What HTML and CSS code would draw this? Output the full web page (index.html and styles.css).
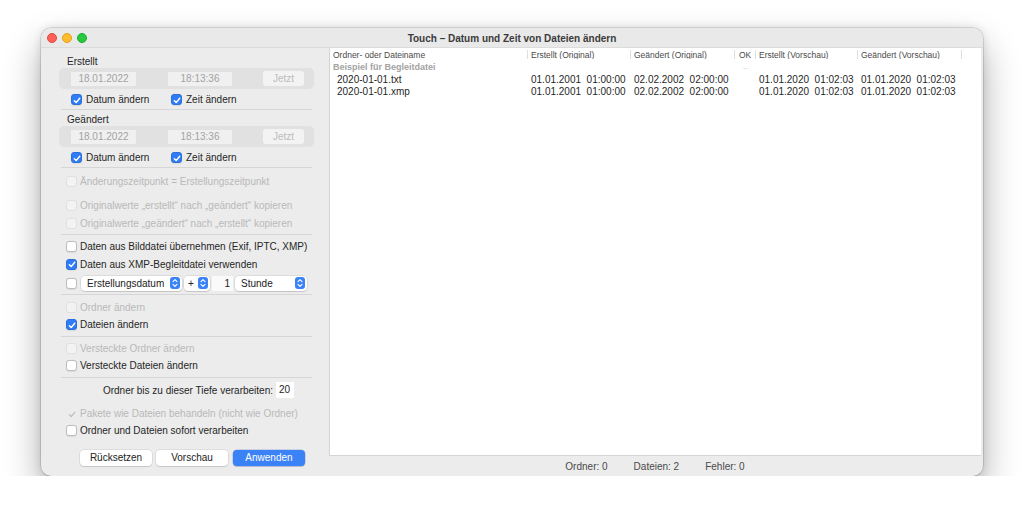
FILE: index.html
```html
<!DOCTYPE html>
<html>
<head>
<meta charset="utf-8">
<link rel="stylesheet" href="styles.css">
</head>
<body>
<div class="window">
  <div class="titlebar">
    <div class="lights"><span class="light red"></span><span class="light yellow"></span><span class="light green"></span></div>
    <div class="title">Touch – Datum und Zeit von Dateien ändern</div>
    <div></div>
  </div>
  <div class="content">
    <div class="sidebar">
      <div class="group-label">Erstellt</div>
      <div class="datebox">
        <div class="field date">18.01.2022</div>
        <div class="field time">18:13:36</div>
        <div class="nowbtn">Jetzt</div>
      </div>
      <div class="checkrow">
        <div class="check wide"><span class="cb on"><svg viewBox="0 0 11 11"><path d="M2.6 5.7 L4.6 7.8 L8.5 3.1"/></svg></span>Datum ändern</div>
        <div class="check"><span class="cb on"><svg viewBox="0 0 11 11"><path d="M2.6 5.7 L4.6 7.8 L8.5 3.1"/></svg></span>Zeit ändern</div>
      </div>
      <div class="sep"></div>
      <div class="group-label second">Geändert</div>
      <div class="datebox">
        <div class="field date">18.01.2022</div>
        <div class="field time">18:13:36</div>
        <div class="nowbtn">Jetzt</div>
      </div>
      <div class="checkrow">
        <div class="check wide"><span class="cb on"><svg viewBox="0 0 11 11"><path d="M2.6 5.7 L4.6 7.8 L8.5 3.1"/></svg></span>Datum ändern</div>
        <div class="check"><span class="cb on"><svg viewBox="0 0 11 11"><path d="M2.6 5.7 L4.6 7.8 L8.5 3.1"/></svg></span>Zeit ändern</div>
      </div>
      <div class="sep"></div>

      <div class="opt disabled mt4"><span class="cb"></span>Änderungszeitpunkt = Erstellungszeitpunkt</div>
      <div class="opt disabled mt6"><span class="cb"></span>Originalwerte „erstellt“ nach „geändert“ kopieren</div>
      <div class="opt disabled"><span class="cb"></span>Originalwerte „geändert“ nach „erstellt“ kopieren</div>
      <div class="sep mt2"></div>

      <div class="opt mt2"><span class="cb"></span>Daten aus Bilddatei übernehmen (Exif, IPTC, XMP)</div>
      <div class="opt"><span class="cb on"><svg viewBox="0 0 11 11"><path d="M2.6 5.7 L4.6 7.8 L8.5 3.1"/></svg></span>Daten aus XMP-Begleitdatei verwenden</div>
      <div class="opt poprow"><span class="cb"></span>
        <div class="popup p-field">Erstellungsdatum<span class="stepper"><svg viewBox="0 0 10 12"><path d="M3 4.6 L5 2.6 L7 4.6 M3 7.4 L5 9.4 L7 7.4"/></svg></span></div>
        <div class="popup p-sign">+<span class="stepper"><svg viewBox="0 0 10 12"><path d="M3 4.6 L5 2.6 L7 4.6 M3 7.4 L5 9.4 L7 7.4"/></svg></span></div>
        <div class="numfield">1</div>
        <div class="popup p-unit">Stunde<span class="stepper"><svg viewBox="0 0 10 12"><path d="M3 4.6 L5 2.6 L7 4.6 M3 7.4 L5 9.4 L7 7.4"/></svg></span></div>
      </div>
      <div class="sep mt2"></div>

      <div class="opt short disabled mt4"><span class="cb"></span>Ordner ändern</div>
      <div class="opt short"><span class="cb on"><svg viewBox="0 0 11 11"><path d="M2.6 5.7 L4.6 7.8 L8.5 3.1"/></svg></span>Dateien ändern</div>
      <div class="sep mt3"></div>

      <div class="opt short disabled mt3"><span class="cb"></span>Versteckte Ordner ändern</div>
      <div class="opt short"><span class="cb"></span>Versteckte Dateien ändern</div>
      <div class="sep mt3"></div>

      <div class="depthrow">Ordner bis zu dieser Tiefe verarbeiten:<div class="depthfield">20</div></div>

      <div class="opt short disabled mt7"><span class="cb ghost"><svg viewBox="0 0 11 11"><path d="M2.6 5.7 L4.6 7.8 L8.5 3.1"/></svg></span>Pakete wie Dateien behandeln (nicht wie Ordner)</div>
      <div class="opt short"><span class="cb"></span>Ordner und Dateien sofort verarbeiten</div>

      <div class="buttons">
        <div class="btn">Rücksetzen</div>
        <div class="btn">Vorschau</div>
        <div class="btn primary">Anwenden</div>
      </div>
    </div>

    <div class="main">
      <div class="table">
        <div class="thead">
          <div class="th">Ordner- oder Dateiname</div>
          <div class="th">Erstellt (Original)</div>
          <div class="th">Geändert (Original)</div>
          <div class="th ok">OK</div>
          <div class="th">Erstellt (Vorschau)</div>
          <div class="th">Geändert (Vorschau)</div>
          <div class="th last"></div>
        </div>
        <div class="tr grouprow">
          <div class="td groupname">Beispiel für Begleitdatei</div>
          <div class="td"></div>
          <div class="td"></div>
          <div class="td dash">–</div>
          <div class="td"></div>
          <div class="td"></div>
          <div class="td"></div>
        </div>
        <div class="tr">
          <div class="td name">2020-01-01.txt</div>
          <div class="td">01.01.2001  01:00:00</div>
          <div class="td">02.02.2002  02:00:00</div>
          <div class="td"></div>
          <div class="td">01.01.2020  01:02:03</div>
          <div class="td">01.01.2020  01:02:03</div>
          <div class="td"></div>
        </div>
        <div class="tr">
          <div class="td name">2020-01-01.xmp</div>
          <div class="td">01.01.2001  01:00:00</div>
          <div class="td">02.02.2002  02:00:00</div>
          <div class="td"></div>
          <div class="td">01.01.2020  01:02:03</div>
          <div class="td">01.01.2020  01:02:03</div>
          <div class="td"></div>
        </div>
      </div>
      <div class="status">
        <span>Ordner: 0</span>
        <span>Dateien: 2</span>
        <span>Fehler: 0</span>
      </div>
    </div>
  </div>
</div>
</body>
</html>
```
FILE: styles.css
```css
html, body {
  margin: 0;
  padding: 0;
  background: #ffffff;
}
body {
  font-family: "Liberation Sans", Arial, sans-serif;
  color: #262626;
  padding-top: 28px;
  padding-left: 41px;
}
.window {
  width: 942px;
  height: 448px;
  border-radius: 10px;
  background: #ececec;
  box-shadow: 0 18px 36px rgba(0, 0, 0, 0.32), 0 0 10px rgba(0, 0, 0, 0.12), 0 0 0 0.5px rgba(0, 0, 0, 0.22);
  overflow: hidden;
  display: flex;
  flex-direction: column;
}
.titlebar {
  height: 20px;
  box-sizing: border-box;
  flex: none;
  display: grid;
  grid-template-columns: 1fr auto 1fr;
  align-items: center;
  background: #e9e9e9;
  border-bottom: 1px solid #dcdcdc;
}
.lights {
  display: flex;
  gap: 5px;
  padding-left: 6px;
  padding-top: 1px;
}
.light {
  width: 10px;
  height: 10px;
  border-radius: 50%;
  box-sizing: border-box;
}
.red { background: #fe5f57; border: 0.5px solid #e2463f; }
.yellow { background: #febc2e; border: 0.5px solid #e1a116; }
.green { background: #28c840; border: 0.5px solid #14ae2a; }
.title {
  font-weight: bold;
  font-size: 10px;
  color: #3b3b3b;
  padding-top: 1px;
}
.content {
  flex: 1;
  display: flex;
  min-height: 0;
}

/* Sidebar */
.sidebar {
  width: 288px;
  flex: none;
  box-sizing: border-box;
  padding: 7px 15px 0 18px;
  font-size: 10px;
  color: #262626;
}
.group-label {
  height: 13px;
  line-height: 14px;
  padding-left: 8px;
}
.group-label.second { margin-top: 3px; }
.datebox {
  height: 21px;
  background: #e1e1e1;
  border-radius: 5px;
  display: flex;
  align-items: center;
  padding-left: 12px;
}
.field {
  height: 14px;
  line-height: 14px;
  background: #f0f0f0;
  color: #a2a2a2;
  text-align: center;
}
.field.date { width: 65px; }
.field.time { width: 64px; margin-left: 32px; }
.nowbtn {
  width: 41px;
  height: 15px;
  line-height: 15px;
  margin-left: 31px;
  text-align: center;
  background: #f3f3f3;
  border-radius: 3px;
  color: #bcbcbc;
}
.checkrow {
  height: 20px;
  box-sizing: border-box;
  padding-top: 1px;
  padding-left: 12px;
  display: flex;
  align-items: center;
}
.check {
  display: flex;
  align-items: center;
  gap: 4px;
}
.check.wide { width: 100px; }
.cb {
  width: 11px;
  height: 11px;
  flex: none;
  box-sizing: border-box;
  border-radius: 3px;
  background: #ffffff;
  border: 0.5px solid #bdbdbd;
  box-shadow: 0 0.5px 1px rgba(0, 0, 0, 0.08);
  display: flex;
}
.cb svg { width: 11px; height: 11px; margin: -0.5px; }
.cb path {
  fill: none;
  stroke: #ffffff;
  stroke-width: 1.6;
  stroke-linecap: round;
  stroke-linejoin: round;
}
.cb.on {
  background: #2f7cf6;
  border-color: #2a6fdc;
}
.sep {
  height: 1px;
  background: #d6d6d6;
  margin: 0 2px;
}
.mt2 { margin-top: 2px; }
.mt3 { margin-top: 3px; }
.mt4 { margin-top: 4px; }
.mt6 { margin-top: 6px; }
.mt7 { margin-top: 7px; }
.opt {
  height: 18px;
  display: flex;
  align-items: center;
  gap: 3px;
  padding-left: 7px;
  white-space: nowrap;
}
.opt.short { height: 17px; }
.opt.disabled { color: #b9b9b9; }
.opt.disabled .cb {
  background: #f3f3f3;
  border-color: #e0e0e0;
  box-shadow: none;
}
.opt.disabled .cb.ghost {
  background: transparent;
  border-color: transparent;
}
.cb.ghost path { stroke: #bdbdbd; stroke-width: 1.4; }
.poprow { gap: 0; margin-top: 1px; }
.poprow .cb { margin-right: 4px; }
.popup {
  height: 15px;
  box-sizing: border-box;
  background: #ffffff;
  border-radius: 4px;
  box-shadow: 0 0 0 0.5px rgba(0, 0, 0, 0.14), 0 1px 1px rgba(0, 0, 0, 0.1);
  display: flex;
  align-items: center;
  justify-content: space-between;
  color: #222;
}
.p-field { width: 101px; padding: 0 2px 0 6px; }
.p-sign { width: 26px; padding: 0 2px 0 4px; margin-left: 2px; }
.p-unit { width: 72px; padding: 0 2px 0 6px; margin-left: 2px; }
.stepper {
  width: 10px;
  height: 12px;
  border-radius: 3px;
  background: #3a82f7;
  display: flex;
}
.stepper svg { width: 10px; height: 12px; }
.stepper path {
  fill: none;
  stroke: #ffffff;
  stroke-width: 1.1;
  stroke-linecap: round;
  stroke-linejoin: round;
}
.numfield {
  width: 21px;
  height: 15px;
  line-height: 15px;
  box-sizing: border-box;
  margin-left: 2px;
  background: #fafafa;
  text-align: right;
  padding-right: 3px;
  color: #222;
}
.depthrow {
  margin-top: 4px;
  height: 16px;
  display: flex;
  align-items: center;
  justify-content: flex-end;
  gap: 3px;
  padding-right: 20px;
}
.depthfield {
  width: 18px;
  height: 16px;
  line-height: 16px;
  box-sizing: border-box;
  background: #ffffff;
  padding-left: 3px;
}
.buttons {
  margin-top: 11px;
  display: flex;
  padding-left: 21px;
  gap: 4px;
}
.btn {
  width: 72px;
  height: 16px;
  line-height: 16px;
  text-align: center;
  background: #ffffff;
  border-radius: 4px;
  box-shadow: 0 0 0 0.5px rgba(0, 0, 0, 0.13), 0 1px 1px rgba(0, 0, 0, 0.1);
  color: #222;
}
.btn.primary {
  margin-left: 1px;
  background: #3b82f7;
  color: #ffffff;
  box-shadow: 0 0 0 0.5px rgba(0, 60, 180, 0.3), 0 1px 1px rgba(0, 0, 0, 0.1);
}

/* Main table */
.main {
  flex: 1;
  display: flex;
  flex-direction: column;
  padding-right: 2px;
  min-width: 0;
}
.table {
  flex: 1;
  background: #ffffff;
  border-left: 1px solid #d4d4d4;
  border-bottom: 1px solid #d4d4d4;
}
.thead, .tr {
  display: grid;
  grid-template-columns: 198px 103px 104px 21px 102px 104px 1fr;
}
.thead {
  height: 13px;
  align-items: center;
}
.th {
  height: 9px;
  line-height: 10px;
  font-size: 8.5px;
  color: #4a4a4a;
  padding-left: 3px;
  border-right: 1px solid #dedede;
  white-space: nowrap;
  overflow: hidden;
}
.th.ok { padding-left: 4px; }
.th.last { border-right: none; }
.tr {
  height: 12px;
  align-items: center;
}
.td {
  font-size: 10px;
  line-height: 13px;
  color: #1f1f1f;
  padding-left: 3px;
  white-space: pre;
  overflow: hidden;
}
.td.name { padding-left: 7px; }
.groupname {
  font-weight: bold;
  font-size: 9px;
  color: #a3a3a3;
}
.dash {
  color: #cfcfcf;
  font-size: 8px;
  padding-left: 8px;
}
.status {
  height: 20px;
  flex: none;
  display: flex;
  justify-content: center;
  align-items: center;
  gap: 26px;
  font-size: 10px;
  color: #4a4a4a;
}
```
